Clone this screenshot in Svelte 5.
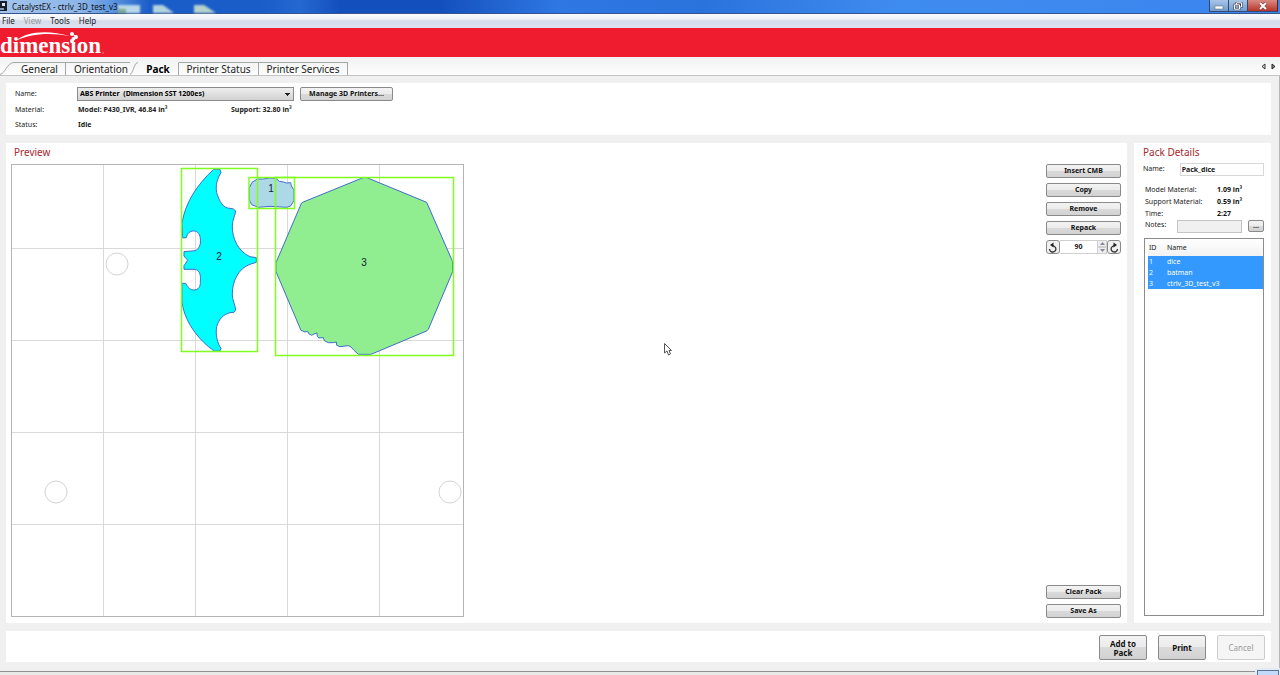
<script>
  let printer = $state('ABS Printer  (Dimension SST 1200es)');
  let packName = $state('Pack_dice');
  let notes = $state('');
  let angle = $state(90);
  let activeTab = $state('Pack');

  const menus = ['File', 'View', 'Tools', 'Help'];
  const tabs = [
    { name: 'General', width: 52 },
    { name: 'Orientation', width: 64 },
    { name: 'Pack', width: 41 },
    { name: 'Printer Status', width: 80 },
    { name: 'Printer Services', width: 89 },
  ];
  const parts = [
    { id: 1, name: 'dice' },
    { id: 2, name: 'batman' },
    { id: 3, name: 'ctrlv_3D_test_v3' },
  ];

  // build plate
  const columns = [92, 184, 276, 368];
  const rows = [84, 176, 268, 360];
  const pins = [
    [106, 100],
    [45, 328],
    [439, 328],
  ];

  function turn(by) {
    angle = (Number(angle) + by + 360) % 360;
  }
</script>

<div class="window">
  <header class="titlebar">
    <svg class="app-icon" width="8" height="11" viewBox="0 0 8 11">
      <rect x="0" y="0" width="7" height="10" fill="#17202c" />
      <rect x="2" y="2" width="3" height="3" fill="#dfe8ef" />
      <rect x="0" y="7" width="4" height="2" fill="#7f9bb5" />
    </svg>
    <h1>CatalystEX - ctrlv_3D_test_v3</h1>
    <!-- desktop showing through the glass -->
    <svg class="glass" width="100" height="13" viewBox="0 0 100 13">
      <path d="M0 5H22V13H0Z" fill="#b9d9ea" />
      <path d="M0 9H8V13H0Z" fill="#7fa98c" />
      <path d="M35 5H45L56 13H35Z" fill="#b5d3dc" />
      <path d="M76 5H86L98 13H76Z" fill="#b5d3cc" />
    </svg>
    <div class="window-buttons">
      <button class="minimize" aria-label="Minimize">
        <svg width="10" height="8" viewBox="0 0 10 8"><rect x="1" y="4" width="8" height="3" fill="#fff" stroke="#566" stroke-width=".5" /></svg>
      </button>
      <button class="restore" aria-label="Restore">
        <svg width="10" height="8" viewBox="0 0 10 8"><path d="M3.500 2.500V.8H8.500V5H7M1.500 2.800H6.500V7.200H1.500Z" fill="none" stroke="#445" stroke-width="2" /><path d="M3.500 2.500V.8H8.500V5H7M1.500 2.800H6.500V7.200H1.500Z" fill="none" stroke="#fff" /></svg>
      </button>
      <button class="close" aria-label="Close">
        <svg width="10" height="8" viewBox="0 0 10 8"><path d="M2 1L8 7M8 1L2 7" stroke="#633" stroke-width="3" /><path d="M2 1L8 7M8 1L2 7" stroke="#fff" stroke-width="2" /></svg>
      </button>
    </div>
  </header>

  <nav class="menubar">
    {#each menus as menu}
      <button disabled={menu == 'View'}>{menu}</button>
    {/each}
  </nav>

  <div class="brand">
    <span>dimension</span>
    <svg width="106" height="29" viewBox="0 0 106 29">
      <path d="M15 13C26 4 46 1 70 8C48 4 30 6 15 13Z" fill="#fff" />
      <path d="M72 6L77 9L73 13" fill="none" stroke="#fff" />
      <circle cx="72" cy="6" r="2" fill="#fff" />
      <circle cx="76" cy="9" r="2" fill="#fff" />
      <circle cx="72" cy="13" r="2" fill="#fff" />
      <circle cx="103" cy="25" r=".7" fill="#f9a0a8" />
    </svg>
  </div>

  <div class="tabbar">
    <svg class="slope" width="14" height="13" viewBox="0 0 14 13"><path d="M0 12.500C5 12 7 .5 14 .5" fill="none" stroke="#a5a5a5" /></svg>
    {#each tabs as tab}
      <button
        class="tab"
        class:active={tab.name == activeTab}
        style="width: {tab.width}px"
        onclick={() => (activeTab = tab.name)}
      >
        {tab.name}
      </button>
      {#if tab.name == 'Orientation'}
        <svg class="slope" width="8" height="13" viewBox="0 0 8 13"><path d="M0 12.500C3 12 4 .5 8 .5" fill="none" stroke="#a5a5a5" /></svg>
      {/if}
    {/each}
    <div class="scroll">
      <button aria-label="Scroll tabs left"><svg width="5" height="7" viewBox="0 0 5 7"><path d="M4 1V6L1 3.500Z" fill="#ddd" stroke="#333" /></svg></button>
      <button aria-label="Scroll tabs right"><svg width="5" height="7" viewBox="0 0 5 7"><path d="M1 1V6L4 3.500Z" fill="#888" stroke="#222" /></svg></button>
    </div>
  </div>

  <main>
    <section class="panel printer">
      <label for="printer">Name:</label>
      <div class="printer-row">
        <select id="printer" bind:value={printer}>
          <option value={printer}>ABS Printer&nbsp; (Dimension SST 1200es)</option>
        </select>
        <button class="btn manage">Manage 3D Printers...</button>
      </div>
      <span>Material:</span>
      <div class="material">
        <b>Model: P430_IVR, 46.84 in³</b>
        <b>Support: 32.80 in³</b>
      </div>
      <span>Status:</span>
      <b class="status">Idle</b>
    </section>

    <div class="columns">
      <section class="panel preview">
        <h2>Preview</h2>
        <div class="work">
          <svg class="plate" width="454" height="454" viewBox="0 0 454 454">
            <g stroke="#d9d9d9">
              {#each columns as x}
                <path d="M{x + 0.5} 0V452" />
              {/each}
              {#each rows as y}
                <path d="M0 {y + 0.5}H452" />
              {/each}
            </g>
            {#each pins as [cx, cy]}
              <circle {cx} {cy} r="11" fill="none" stroke="#d4d4d4" />
            {/each}
            <rect x=".5" y=".5" width="452" height="452" fill="none" stroke="#b4b4b4" />

            <g stroke="#3f6ccc" stroke-width="3">
              <path
                transform="translate(159 -4) scale(.3333)"
                fill="#00ffff"
                d="M131 28L150 28L153 38C142 55 136 75 140 98C148 125 160 145 180 145L190 147L197 153C196 165 187 180 187 198C186 235 205 275 240 290L259 293V307L240 313C205 325 186 365 187 405C187 420 196 435 197 450L192 457L180 458C160 464 148 475 140 500C136 525 142 550 153 565L150 573H133C90 545 36 480 36 415V370H47C55 385 62 390 72 390C85 390 92 380 91 365C94 340 85 330 75 328H42V317L53 301L42 288V275L75 272C85 270 94 255 91 235C89 218 80 213 70 213C60 213 52 220 49 233L38 234L36 190C45 130 80 75 131 28Z"
              />
              <path
                transform="translate(159 -4) scale(.3333)"
                fill="#add8e6"
                d="M262 57L280 57L300 54L318 55L328 64L340 66L350 69L362 68L364 78L372 90V122L362 138L350 142L300 139L265 142L245 134L238 120V84L246 67Z"
              />
              <path
                transform="translate(259 -4) scale(.3333)"
                fill="#90ee90"
                d="M277 54Q285 51 293 54L470 127L548 305V335L475 508Q472 513 465 515L303 583H265L252 571L243 561L235 557L210 560L200 556L199 546L190 548L175 548L163 542L160 533L147 534L142 530L141 519L132 522L125 526L116 521L113 514L105 516L93 511L18 335V308L92 135Q93 128 100 126Z"
              />
            </g>
            <g fill="none" stroke="#7fff20" stroke-width="1.500">
              <rect x="170.500" y="4.500" width="76" height="183" />
              <rect x="238" y="13.500" width="45.500" height="31" />
              <rect x="264.500" y="13.500" width="178" height="178" />
            </g>
            <g class="part-ids">
              <text x="260" y="28">1</text>
              <text x="208" y="96">2</text>
              <text x="353" y="102">3</text>
            </g>
          </svg>

          <div class="actions">
            <button class="btn">Insert CMB</button>
            <button class="btn">Copy</button>
            <button class="btn">Remove</button>
            <button class="btn">Repack</button>
            <div class="rotate">
              <button class="btn" aria-label="Rotate left" onclick={() => turn(-90)}>
                <svg width="10" height="11" viewBox="0 0 10 11"><path d="M1.500 7A3.200 3 0 1 0 6.500 4.500L4 3.200" fill="none" stroke="#333" stroke-width="1.300" /><path d="M5.500 .5L2 3L5.500 5.500Z" fill="#222" /></svg>
              </button>
              <input type="text" aria-label="Angle" bind:value={angle} />
              <span class="spin">
                <button aria-label="Increase angle" onclick={() => turn(1)}><svg width="5" height="3" viewBox="0 0 5 3"><path d="M0 3L2.500 0L5 3Z" fill="#889" /></svg></button>
                <button aria-label="Decrease angle" onclick={() => turn(-1)}><svg width="5" height="3" viewBox="0 0 5 3"><path d="M0 0L2.500 3L5 0Z" fill="#889" /></svg></button>
              </span>
              <button class="btn" aria-label="Rotate right" onclick={() => turn(90)}>
                <svg width="10" height="11" viewBox="0 0 10 11"><path d="M8.500 7A3.200 3 0 1 1 3.500 4.500L6 3.200" fill="none" stroke="#333" stroke-width="1.300" /><path d="M4.500 .5L8 3L4.500 5.500Z" fill="#222" /></svg>
              </button>
            </div>
            <button class="btn clear">Clear Pack</button>
            <button class="btn">Save As</button>
          </div>
        </div>
      </section>

      <section class="panel details">
        <h2>Pack Details</h2>
        <div class="name-row">
          <label for="pack-name">Name:</label>
          <input id="pack-name" type="text" bind:value={packName} />
        </div>
        <dl>
          <dt>Model Material:</dt>
          <dd>1.09 in³</dd>
          <dt>Support Material:</dt>
          <dd>0.59 in³</dd>
          <dt>Time:</dt>
          <dd>2:27</dd>
        </dl>
        <div class="notes-row">
          <label for="notes">Notes:</label>
          <input id="notes" type="text" bind:value={notes} />
          <button class="btn" aria-label="Edit notes">...</button>
        </div>
        <div class="list">
          <table>
            <thead>
              <tr><th>ID</th><th>Name</th></tr>
            </thead>
            <tbody>
              {#each parts as part}
                <tr><td>{part.id}</td><td>{part.name}</td></tr>
              {/each}
            </tbody>
          </table>
        </div>
      </section>
    </div>

    <section class="panel footer">
      <button class="btn big">Add to Pack</button>
      <button class="btn big">Print</button>
      <button class="btn big" disabled>Cancel</button>
    </section>
  </main>

  <div class="edge"></div>
  <i class="tray"></i>

  <svg class="cursor" width="8" height="13" viewBox="0 0 8 13"><path d="M.5 .5V10L3 8L4.500 12L6.500 11L5 7.500H7.500Z" fill="#fff" stroke="#555" /></svg>
</div>

<style>
  :global(body) {
    margin: 0;
    background: #f0f0f0;
  }

  .window {
    position: relative;
    display: flex;
    flex-direction: column;
    min-height: 100vh;
    overflow: hidden;
    font-family: "Noto Sans", "Open Sans", sans-serif;
    font-size: 7px;
    line-height: 12px;
    color: #222;
  }

  button,
  input,
  select {
    box-sizing: border-box;
    margin: 0;
    padding: 0;
    font: inherit;
    color: inherit;
  }

  button {
    border: 0;
    background: none;
  }

  svg {
    display: block;
  }

  /* title bar and menu */
  .titlebar {
    display: flex;
    align-items: center;
    height: 14px;
    border-bottom: 1px solid #35558c;
    box-sizing: border-box;
    background: linear-gradient(90deg, #a3c4ec 0, #8db6ea 80px, #5f97e0 110px, #1a5cc8 150px, #1a5cc8 260px, #2468d0 300px, #1450bd 340px, #1450bd 440px, #2f78e4 560px, #2a72dc 700px, #3f8cf0 900px, #3a85ee 100%);
  }

  h1 {
    margin: 0 0 0 4px;
    font-size: 8px;
    font-weight: 400;
    color: #111;
  }

  .glass {
    filter: blur(1px);
  }

  .window-buttons {
    display: flex;
    align-self: flex-start;
    margin-left: auto;
    margin-right: 2px;
  }

  .window-buttons button {
    display: grid;
    place-items: center;
    width: 19px;
    height: 12px;
    border: 1px solid #33486e;
    border-top: 0;
    border-right: 0;
    background: linear-gradient(#a9c4e6, #6f9bd0);
  }

  .window-buttons .close {
    width: 31px;
    border-right: 1px solid #5c2020;
    background: linear-gradient(#d98a80, #b8352a);
  }

  .menubar {
    display: flex;
    gap: 9px;
    height: 14px;
    padding-left: 2px;
    background: linear-gradient(#fafbfd 0, #eef1f8 5px, #d6dcec 7px, #dde2f0);
  }

  .menubar button {
    font-size: 8px;
    line-height: 14px;
  }

  .menubar button:disabled {
    color: #999;
  }

  /* red strip with the logo */
  .brand {
    display: grid;
    height: 29px;
    background: #ee1c2e;
  }

  .brand > * {
    grid-area: 1 / 1;
  }

  .brand span {
    align-self: end;
    font-family: "Liberation Serif", serif;
    font-weight: 700;
    font-size: 23px;
    line-height: 22px;
    color: #fff;
  }

  .tabbar {
    display: flex;
    align-items: flex-end;
    height: 19px;
    box-sizing: border-box;
    border-bottom: 1px solid #c4c4c4;
    background: linear-gradient(#f1f1f1, #fdfdfd);
  }

  .tab {
    height: 13px;
    border-top: 1px solid #a5a5a5;
    border-right: 1px solid #a5a5a5;
    font-size: 10px;
    line-height: 11px;
    white-space: nowrap;
  }

  .tab:nth-of-type(2) {
    border-right: 0;
    padding-left: 6px;
  }

  .tab.active {
    border-top-color: transparent;
    font-weight: 700;
    color: #000;
  }

  .scroll {
    display: flex;
    align-self: center;
    gap: 5px;
    margin-left: auto;
    padding-right: 4px;
  }

  /* panels */
  main {
    flex: 1;
    display: flex;
    flex-direction: column;
    gap: 8px;
    padding: 7px 8px 9px 6px;
    border-right: 1px solid #b4b8bc;
    background: #f0f0f0;
  }

  .panel {
    box-sizing: border-box;
    background: #fff;
  }

  .printer {
    display: grid;
    grid-template-columns: 62px 1fr;
    grid-template-rows: 16px 15px 15px;
    align-items: center;
    height: 52px;
    padding: 3px 9px;
  }

  .printer-row {
    display: flex;
    gap: 6px;
  }

  .printer b {
    padding-left: 1px;
  }

  .material {
    display: flex;
  }

  .material b:first-child {
    width: 152px;
  }

  select {
    appearance: none;
    width: 217px;
    height: 14px;
    padding-left: 2px;
    border: 1px solid #8c8c8c;
    background:
      linear-gradient(#222, #222) right 4px top 6px / 3px 1px no-repeat,
      linear-gradient(#222, #222) right 3px top 5px / 5px 1px no-repeat,
      linear-gradient(#222, #222) right 5px top 7px / 1px 1px no-repeat,
      linear-gradient(#eee, #d2d2d2);
    font-weight: 700;
    color: #000;
  }

  .btn {
    display: grid;
    place-items: center;
    height: 14px;
    border: 1px solid #8a8a8a;
    border-radius: 2px;
    background: linear-gradient(#f3f3f3 0, #ebebeb 50%, #dadada 50%, #d2d2d2);
    font-weight: 700;
    line-height: 10px;
    color: #111;
  }

  .manage {
    width: 93px;
  }

  .columns {
    flex: 1;
    display: flex;
    gap: 7px;
  }

  .preview {
    flex: 1;
    display: flex;
    flex-direction: column;
    padding: 3px 6px 5px 5px;
  }

  h2 {
    margin: 0;
    font-size: 10px;
    font-weight: 400;
    line-height: 13px;
    color: #a8282c;
  }

  .preview h2 {
    padding-left: 3px;
  }

  .work {
    flex: 1;
    display: flex;
    justify-content: space-between;
    padding-top: 5px;
  }

  .part-ids {
    font-family: "Liberation Sans", sans-serif;
    font-size: 10px;
    text-anchor: middle;
    fill: #123;
  }

  .actions {
    display: flex;
    flex-direction: column;
    gap: 5px;
    width: 75px;
  }

  .rotate {
    display: flex;
  }

  .rotate .btn {
    width: 14px;
    border-radius: 3px;
    background: #f0f0f0;
  }

  .rotate input {
    flex: 1;
    min-width: 0;
    border: 1px solid #d0d0d0;
    border-width: 1px 0;
    font-weight: 700;
    text-align: center;
  }

  .spin {
    display: flex;
    flex-direction: column;
    width: 10px;
  }

  .spin button {
    display: grid;
    place-items: center;
    height: 7px;
    border: 1px solid #d0d0d0;
    background: #eee;
  }

  .clear {
    margin-top: auto;
  }

  .details {
    display: flex;
    flex-direction: column;
    width: 137px;
    padding: 3px 7px 7px 9px;
  }

  .name-row {
    display: flex;
    gap: 15px;
    padding-top: 4px;
  }

  .name-row input {
    flex: 1;
    min-width: 0;
    height: 13px;
    padding-left: 1px;
    border: 1px solid #d8d8d8;
    font-weight: 700;
  }

  dl {
    display: grid;
    grid-template-columns: 72px 1fr;
    margin: 8px 0 0 2px;
  }

  dd {
    margin: 0;
    font-weight: 700;
    color: #111;
  }

  .notes-row {
    display: flex;
    gap: 6px;
    padding-left: 2px;
    line-height: 10px;
  }

  .notes-row label {
    width: 26px;
  }

  .notes-row input {
    flex: 1;
    min-width: 0;
    height: 13px;
    border: 1px solid #c4c4c4;
    background: #f0f0f0;
  }

  .notes-row .btn {
    width: 16px;
    height: 12px;
  }

  .list {
    flex: 1;
    margin: 5px 0 0 1px;
    border: 1px solid #8c8c8c;
  }

  table {
    width: 100%;
    padding-left: 3px;
    border-collapse: separate;
    border-spacing: 0;
    line-height: 11px;
  }

  th,
  td {
    padding: 0 1px;
    font-weight: 400;
    text-align: left;
  }

  th {
    height: 17px;
    background: linear-gradient(#fff, #f2f2f2);
  }

  th:first-child {
    width: 16px;
  }

  tbody {
    background: #3399ff;
    color: #fff;
  }

  .footer {
    display: flex;
    justify-content: flex-end;
    align-items: flex-end;
    gap: 11px;
    height: 31px;
    padding: 0 6px 2px 0;
  }

  .big {
    width: 48px;
    height: 25px;
    font-size: 8px;
    line-height: 9px;
  }

  .big:disabled {
    border-color: #ccc;
    background: #f5f5f5;
    font-weight: 400;
    color: #999;
  }

  .edge {
    height: 3px;
    border-top: 1px solid #8f9492;
    background: #e8eae8;
  }

  .tray {
    position: absolute;
    right: 1px;
    bottom: 0;
    width: 20px;
    height: 4px;
    border: 1px solid #5a7396;
    border-bottom: 0;
    outline: 2px solid #e4ebf4;
    background: #c4dafa;
  }

  .cursor {
    position: absolute;
    left: 664px;
    top: 343px;
  }
</style>
